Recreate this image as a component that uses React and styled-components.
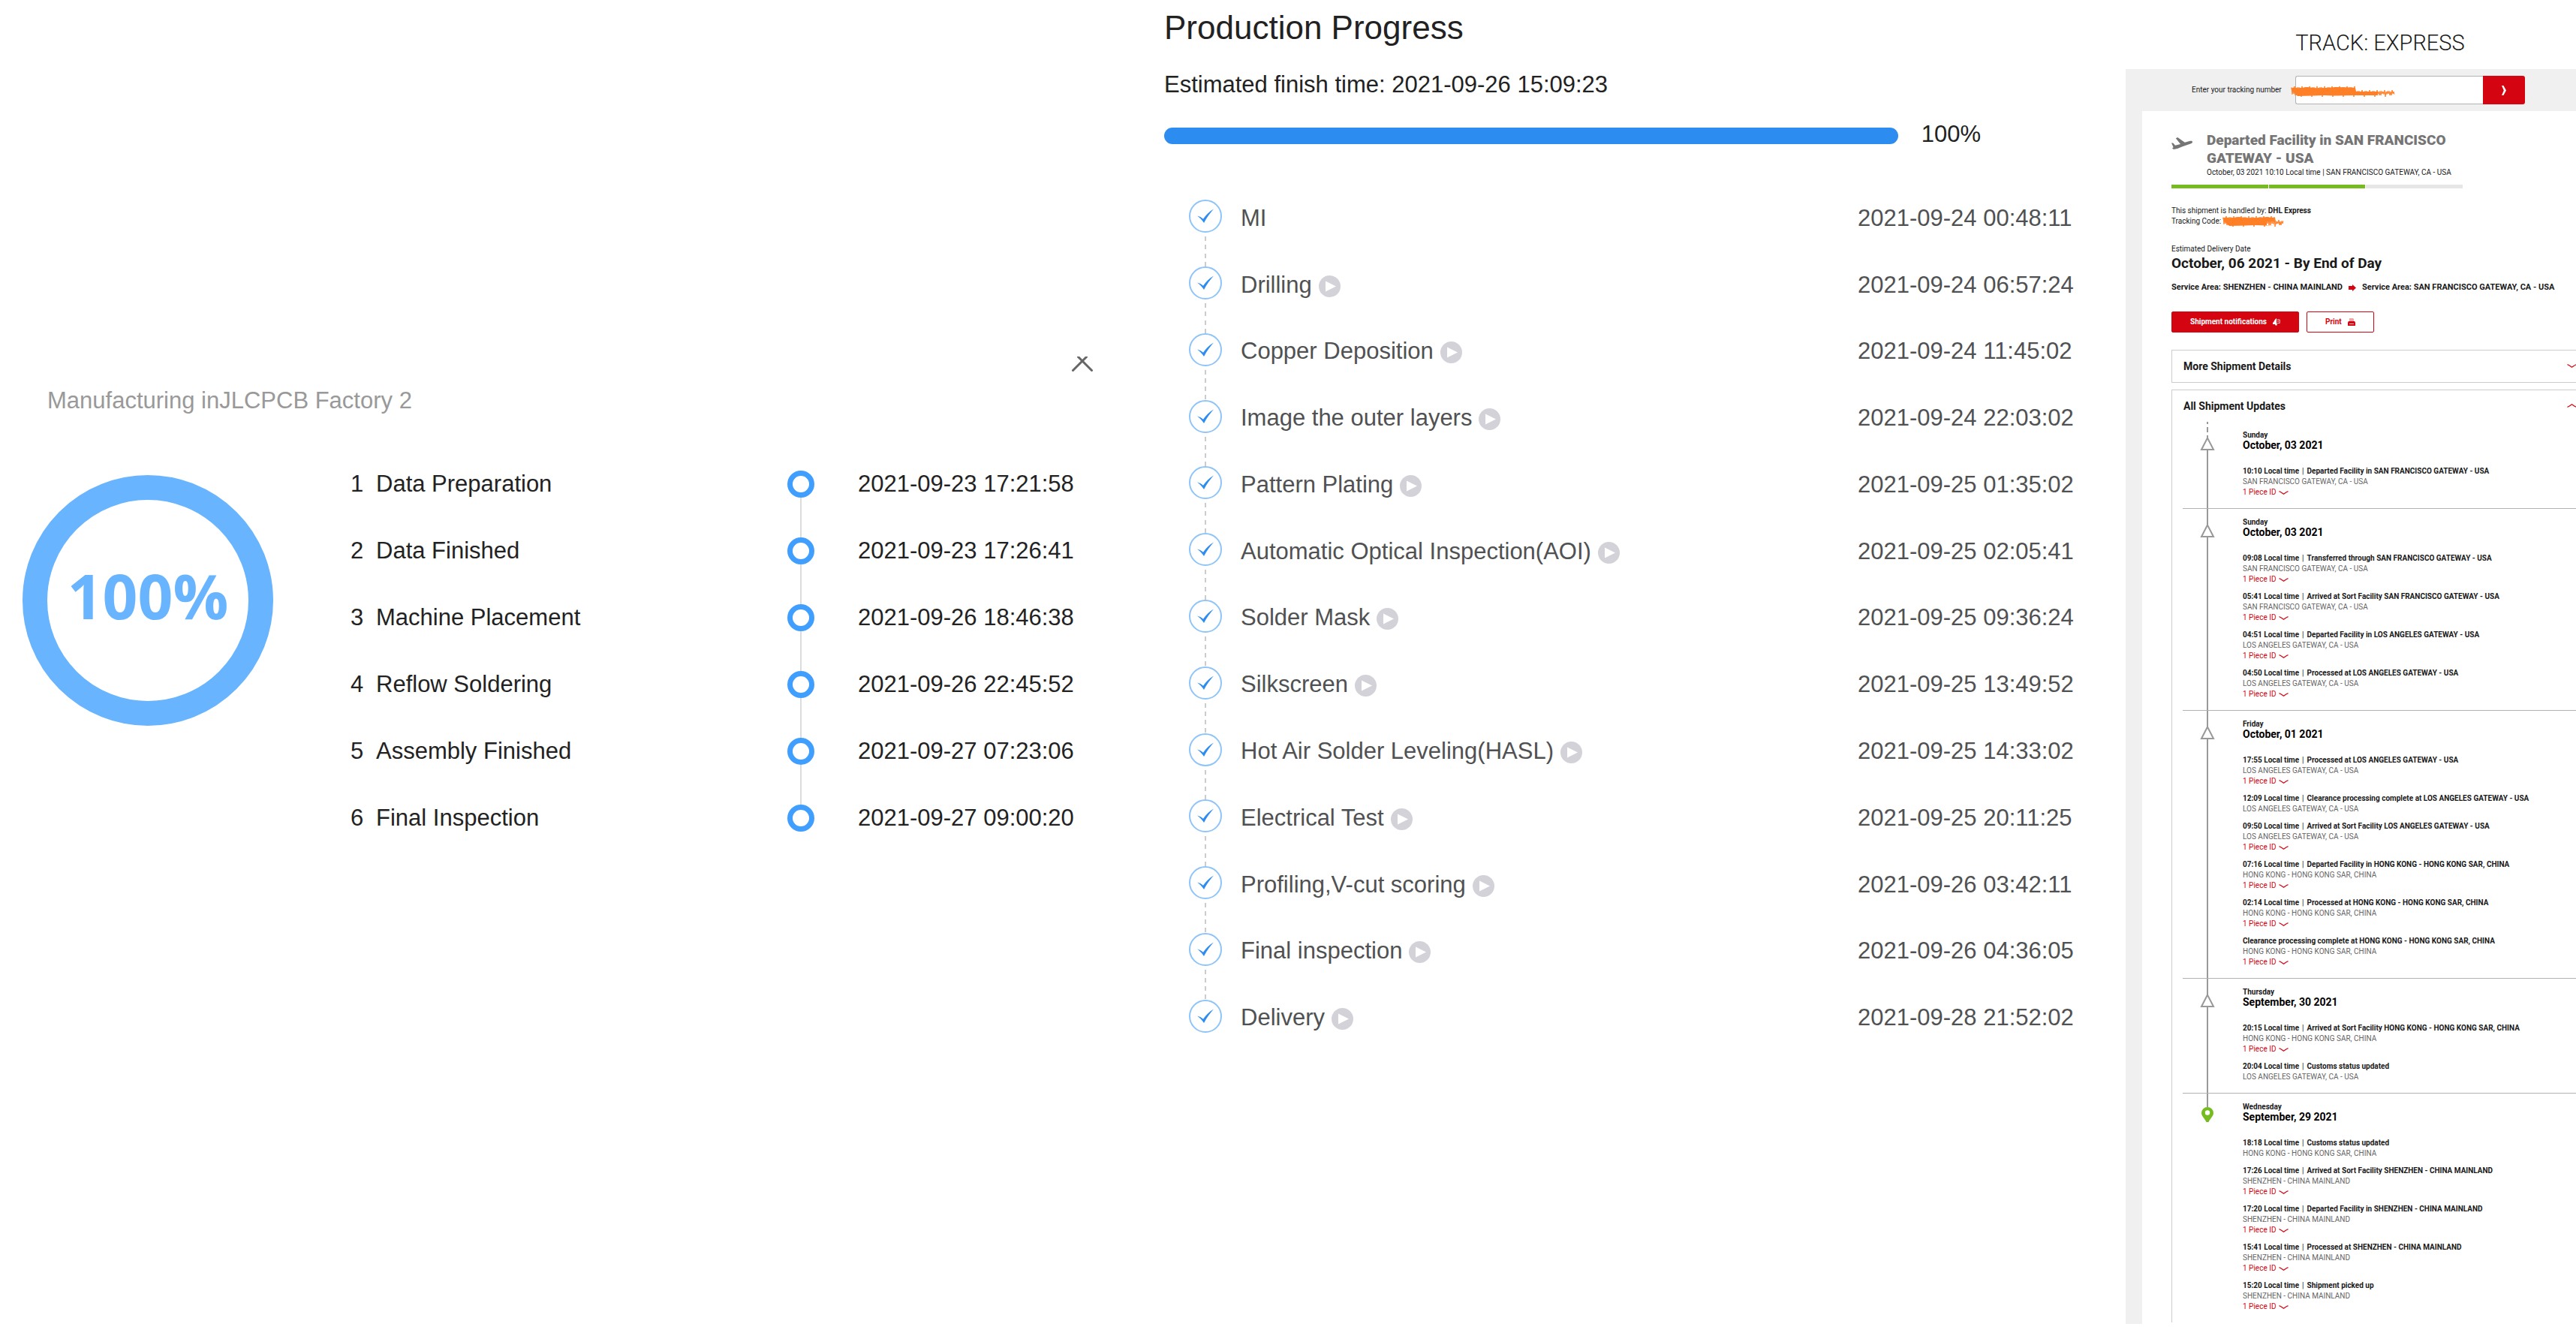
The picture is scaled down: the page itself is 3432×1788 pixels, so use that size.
import React from "react";
import styled, { createGlobalStyle, css } from "styled-components";

const assemblySteps = [
  { name: "Data Preparation", time: "2021-09-23 17:21:58" },
  { name: "Data Finished", time: "2021-09-23 17:26:41" },
  { name: "Machine Placement", time: "2021-09-26 18:46:38" },
  { name: "Reflow Soldering", time: "2021-09-26 22:45:52" },
  { name: "Assembly Finished", time: "2021-09-27 07:23:06" },
  { name: "Final Inspection", time: "2021-09-27 09:00:20" },
];

const productionSteps = [
  { name: "MI", time: "2021-09-24 00:48:11", video: false },
  { name: "Drilling", time: "2021-09-24 06:57:24", video: true },
  { name: "Copper Deposition", time: "2021-09-24 11:45:02", video: true },
  { name: "Image the outer layers", time: "2021-09-24 22:03:02", video: true },
  { name: "Pattern Plating", time: "2021-09-25 01:35:02", video: true },
  { name: "Automatic Optical Inspection(AOI)", time: "2021-09-25 02:05:41", video: true },
  { name: "Solder Mask", time: "2021-09-25 09:36:24", video: true },
  { name: "Silkscreen", time: "2021-09-25 13:49:52", video: true },
  { name: "Hot Air Solder Leveling(HASL)", time: "2021-09-25 14:33:02", video: true },
  { name: "Electrical Test", time: "2021-09-25 20:11:25", video: true },
  { name: "Profiling,V-cut scoring", time: "2021-09-26 03:42:11", video: true },
  { name: "Final inspection", time: "2021-09-26 04:36:05", video: true },
  { name: "Delivery", time: "2021-09-28 21:52:02", video: true },
];

const SF = "SAN FRANCISCO GATEWAY, CA - USA";
const LA = "LOS ANGELES GATEWAY, CA - USA";
const HK = "HONG KONG - HONG KONG SAR, CHINA";
const SZ = "SHENZHEN - CHINA MAINLAND";

const shipmentDays = [
  {
    day: "Sunday",
    date: "October, 03 2021",
    events: [
      { time: "10:10", text: "Departed Facility in SAN FRANCISCO GATEWAY - USA", place: SF, piece: true },
    ],
  },
  {
    day: "Sunday",
    date: "October, 03 2021",
    events: [
      { time: "09:08", text: "Transferred through SAN FRANCISCO GATEWAY - USA", place: SF, piece: true },
      { time: "05:41", text: "Arrived at Sort Facility SAN FRANCISCO GATEWAY - USA", place: SF, piece: true },
      { time: "04:51", text: "Departed Facility in LOS ANGELES GATEWAY - USA", place: LA, piece: true },
      { time: "04:50", text: "Processed at LOS ANGELES GATEWAY - USA", place: LA, piece: true },
    ],
  },
  {
    day: "Friday",
    date: "October, 01 2021",
    events: [
      { time: "17:55", text: "Processed at LOS ANGELES GATEWAY - USA", place: LA, piece: true },
      { time: "12:09", text: "Clearance processing complete at LOS ANGELES GATEWAY - USA", place: LA },
      { time: "09:50", text: "Arrived at Sort Facility LOS ANGELES GATEWAY - USA", place: LA, piece: true },
      { time: "07:16", text: "Departed Facility in HONG KONG - HONG KONG SAR, CHINA", place: HK, piece: true },
      { time: "02:14", text: "Processed at HONG KONG - HONG KONG SAR, CHINA", place: HK, piece: true },
      { text: "Clearance processing complete at HONG KONG - HONG KONG SAR, CHINA", place: HK, piece: true },
    ],
  },
  {
    day: "Thursday",
    date: "September, 30 2021",
    events: [
      { time: "20:15", text: "Arrived at Sort Facility HONG KONG - HONG KONG SAR, CHINA", place: HK, piece: true },
      { time: "20:04", text: "Customs status updated", place: LA },
    ],
  },
  {
    day: "Wednesday",
    date: "September, 29 2021",
    events: [
      { time: "18:18", text: "Customs status updated", place: HK },
      { time: "17:26", text: "Arrived at Sort Facility SHENZHEN - CHINA MAINLAND", place: SZ, piece: true },
      { time: "17:20", text: "Departed Facility in SHENZHEN - CHINA MAINLAND", place: SZ, piece: true },
      { time: "15:41", text: "Processed at SHENZHEN - CHINA MAINLAND", place: SZ, piece: true },
      { time: "15:20", text: "Shipment picked up", place: SZ, piece: true },
    ],
  },
];

const CollapseIcon = () => (
  <svg width="30" height="21" viewBox="0 0 30 21" fill="none" stroke="#666" strokeWidth="3" strokeLinecap="round">
    <path d="M2.5 18.5 20.5 0.5M27.5 18.5 9.5 0.5" />
  </svg>
);

const CheckIcon = () => (
  <svg width="44" height="44" viewBox="0 0 44 44">
    <circle cx="22" cy="22" r="21" fill="#fff" stroke="#8fc4f9" strokeWidth="2" />
    <path d="M11 21.5c3 .8 5.500 2 8 4.200C22.500 20.500 27 16 33 12.500 28 18 23.500 24 20 31c-2.500-4-5.500-7-9-9.500z" fill="#2d8cf0" />
  </svg>
);

const PlayIcon = () => (
  <svg width="29" height="29" viewBox="0 0 29 29">
    <circle cx="14.500" cy="14.500" r="14.500" fill="#d2d2d8" />
    <path d="M9 7.500v14l14-7z" fill="#fff" />
  </svg>
);

const PlaneIcon = () => (
  <svg width="28" height="16" viewBox="0 0 28 16" fill="#757575">
    <path d="M0 7.500h2.200L5 10.800l7-1.900L5.800 1.200 8.200 0l9.600 6.800 6.200-1.700c2.400-.6 4-.2 4 1.100 0 1.100-1.200 2-3.200 2.600L14 12.600l-6 2.300-5 1L1 14.600l1.600-1.300z" />
  </svg>
);

const SubmitIcon = () => (
  <svg width="6" height="13" viewBox="0 0 6 13" fill="#fff">
    <path d="M0 0h2.400L6 6.500 2.400 13H0l2.800-6.500z" />
  </svg>
);

const RouteIcon = () => (
  <svg width="10" height="9" viewBox="0 0 10 9" fill="#d40511">
    <path d="M0 2h5V0l5 4.500L5 9V7H0z" />
  </svg>
);

const BellIcon = () => (
  <svg width="10" height="10" viewBox="0 0 10 10">
    <path d="M5 0v7.500h1L5.500 9.500H3.500L3 8H0V6C2 5 1.800 2 5 0z" fill="#fff" />
    <path d="M5.500 2h3.800v4.500H5.500M6 4.200h2.200" fill="none" stroke="#fff" strokeOpacity=".75" />
  </svg>
);

const PrintIcon = () => (
  <svg width="10" height="10" viewBox="0 0 10 10">
    <path d="M2 0h5l1 1v4H2z" fill="#f0a5aa" />
    <path d="M1 4h8l1 1.500V10H0V5.500z" fill="#d40511" />
    <path d="M2 7.500h6" stroke="#f6c6c9" />
  </svg>
);

const Chevron = ({ up }) => (
  <svg width="13" height="5" viewBox="0 0 13 5" fill="none" stroke="#d40511" strokeWidth="1.300">
    <path d={up ? "M.5 4.300C3 3.500 4.500 2 6.500.8 8.500 2 10 3.500 12.500 4.300" : "M.5.700C3 1.500 4.500 3 6.500 4.200 8.500 3 10 1.500 12.500.700"} />
  </svg>
);

const TriangleIcon = () => (
  <svg width="20" height="20" viewBox="0 0 20 20">
    <path d="M10 0v4" stroke="#999" strokeWidth="2" />
    <path d="M10 3.500 18 19H2z" fill="#fff" stroke="#999" strokeWidth="2" />
  </svg>
);

const PinIcon = () => (
  <svg width="16" height="20" viewBox="0 0 16 20">
    <path d="M8 0a8 8 0 0 1 8 8c0 4-4.500 7.500-6.500 12h-3C4.500 15.500 0 12 0 8a8 8 0 0 1 8-8z" fill="#76bc21" />
    <circle cx="8" cy="7.500" r="3.200" fill="#fff" />
  </svg>
);

// Marker scribble that hides a number: a heavy stroke with a ragged edge, then a thin tail
const buildScribble = (width, solid) => {
  const points = [];
  for (let x = 1; x < width - 1; x += 1) {
    const thick = x < solid;
    const top = (thick ? 0 : 5) + ((x * x * 7) % 5) / 1.5;
    const bottom = 14 - ((x * x * 3) % 7) / 1.5;
    points.push(`${x},${x % 2 ? top : bottom}`);
  }
  return points.join(" ");
};

const Scribble = ({ width, solid }) => (
  <ScribbleSvg width={width} height="15" viewBox={`0 0 ${width} 15`} aria-hidden="true">
    <polyline points={buildScribble(width, solid)} fill="none" stroke="#ff7f27" />
    <path
      d={`M0 3 4 1.500 10 2.500 22 1 34 2.500 48 2 60 1 ${solid - 8} 1.500 ${solid} 2 ${solid + 1} 7 ${width - 24} 7V12L${solid} 12 58 12.500 44 12 30 12.500 9 13 4 8Z`}
      fill="#ff7f27"
    />
  </ScribbleSvg>
);

const ShipmentEvent = ({ event }) => (
  <EventItem>
    <EventTitle>
      {event.time && (
        <>
          {event.time} Local time<Separator>|</Separator>
        </>
      )}
      {event.text}
    </EventTitle>
    <EventPlace>{event.place}</EventPlace>
    {event.piece && (
      <PieceButton type="button">
        1 Piece ID <Chevron />
      </PieceButton>
    )}
  </EventItem>
);

export default function App() {
  return (
    <>
      <GlobalStyle />
      <Page>
        <AssemblyColumn>
          <CollapseButton type="button" aria-label="Collapse">
            <CollapseIcon />
          </CollapseButton>
          <FactoryName>Manufacturing inJLCPCB Factory 2</FactoryName>
          <AssemblyBody>
            <Ring>100%</Ring>
            <AssemblyList>
              {assemblySteps.map((step, index) => (
                <AssemblyRow key={step.name}>
                  <span>{index + 1}</span>
                  <span>{step.name}</span>
                  <Track>
                    <Stem $hidden={index === 0} />
                    <Dot />
                    <Stem $hidden={index === assemblySteps.length - 1} />
                  </Track>
                  <AssemblyTime>{step.time}</AssemblyTime>
                </AssemblyRow>
              ))}
            </AssemblyList>
          </AssemblyBody>
        </AssemblyColumn>

        <ProductionColumn>
          <ProductionTitle>Production Progress</ProductionTitle>
          <FinishTime>Estimated finish time: 2021-09-26 15:09:23</FinishTime>
          <ProgressRow>
            <ProgressBar role="progressbar" aria-label="Production progress" aria-valuenow={100} />
            <span>100%</span>
          </ProgressRow>
          <ProductionList>
            {productionSteps.map((step, index) => (
              <ProductionRow key={step.name}>
                <Track>
                  <Stem $dashed $hidden={index === 0} />
                  <CheckIcon />
                  <Stem $dashed $hidden={index === productionSteps.length - 1} />
                </Track>
                <ProductionName>
                  {step.name}
                  {step.video && (
                    <PlayButton type="button" aria-label={`Play ${step.name}`}>
                      <PlayIcon />
                    </PlayButton>
                  )}
                </ProductionName>
                <ProductionTime>{step.time}</ProductionTime>
              </ProductionRow>
            ))}
          </ProductionList>
        </ProductionColumn>

        <TrackColumn>
          <TrackPanel>
            <TrackTitle>TRACK: EXPRESS</TrackTitle>
            <TrackBody>
              <SearchForm onSubmit={(e) => e.preventDefault()}>
                <label htmlFor="tracking">Enter your tracking number</label>
                <SearchField>
                  <SearchInput id="tracking" type="text" />
                  <InputScribble>
                    <Scribble width={140} solid={86} />
                  </InputScribble>
                </SearchField>
                <SearchButton type="submit" aria-label="Track">
                  <SubmitIcon />
                </SearchButton>
              </SearchForm>
              <Card>
                <Status>
                  <StatusIcon>
                    <PlaneIcon />
                  </StatusIcon>
                  <div>
                    <StatusTitle>Departed Facility in SAN FRANCISCO GATEWAY - USA</StatusTitle>
                    <Line>October, 03 2021 10:10 Local time | SAN FRANCISCO GATEWAY, CA - USA</Line>
                  </div>
                </Status>
                <StageBar>
                  <Stage $done />
                  <Stage $done />
                  <Stage />
                </StageBar>
                <Block>
                  <Line>
                    This shipment is handled by: <b>DHL Express</b>
                  </Line>
                  <CodeLine>
                    Tracking Code: <Scribble width={83} solid={70} />
                  </CodeLine>
                </Block>
                <Block>
                  <Line>Estimated Delivery Date</Line>
                  <DeliveryDate>October, 06 2021 - By End of Day</DeliveryDate>
                </Block>
                <Route>
                  <span>Service Area: SHENZHEN - CHINA MAINLAND</span>
                  <RouteIcon />
                  <span>Service Area: SAN FRANCISCO GATEWAY, CA - USA</span>
                </Route>
                <Actions>
                  <ActionButton type="button" $primary>
                    Shipment notifications <BellIcon />
                  </ActionButton>
                  <ActionButton type="button">
                    Print <PrintIcon />
                  </ActionButton>
                </Actions>
                <Box>
                  <BoxHeader type="button" aria-expanded="false">
                    More Shipment Details <Chevron />
                  </BoxHeader>
                </Box>
                <Box $open>
                  <BoxHeader type="button" aria-expanded="true">
                    All Shipment Updates <Chevron up />
                  </BoxHeader>
                  {shipmentDays.map((item, index) => {
                    const last = index === shipmentDays.length - 1;
                    return (
                      <DaySection key={item.day + index}>
                        <DayTrack>
                          <DayStem $first={index === 0} />
                          {last ? <PinIcon /> : <TriangleIcon />}
                          {!last && <DayLine />}
                        </DayTrack>
                        <DayContent>
                          <DayName>{item.day}</DayName>
                          <DayDate>{item.date}</DayDate>
                          <EventList>
                            {item.events.map((event) => (
                              <ShipmentEvent key={event.text} event={event} />
                            ))}
                          </EventList>
                        </DayContent>
                      </DaySection>
                    );
                  })}
                </Box>
              </Card>
            </TrackBody>
          </TrackPanel>
        </TrackColumn>
      </Page>
    </>
  );
}

const GlobalStyle = createGlobalStyle`
  * {
    box-sizing: border-box;
  }
  body {
    margin: 0;
    background: #fff;
  }
  h1, h2, h3, p, ol, ul {
    margin: 0;
    padding: 0;
    font-weight: inherit;
    list-style: none;
  }
  button {
    padding: 0;
    border: 0;
    background: none;
    font: inherit;
    color: inherit;
    cursor: pointer;
  }
  svg {
    display: block;
    flex: none;
  }
`;

const Page = styled.main`
  display: grid;
  grid-template-columns: 1551fr 1281fr 600fr;
  font-family: "Liberation Sans", Arial, sans-serif;
  font-size: 31px;
  line-height: 36px;
  color: #222;
`;

/* Assembly */
const AssemblyColumn = styled.section`
  display: flex;
  flex-direction: column;
  min-width: 0;
  padding: 475px 118px 0 30px;
`;
const CollapseButton = styled.button`
  align-self: flex-end;
  margin-right: -24px;
`;
const FactoryName = styled.h2`
  margin: 20px 0 48px 33px;
  font-size: 31px;
  color: #999;
`;
const AssemblyBody = styled.div`
  display: flex;
  gap: 103px;
`;
const Ring = styled.div`
  display: flex;
  flex: none;
  align-items: center;
  justify-content: center;
  width: 334px;
  height: 334px;
  margin-top: 33px;
  border: 33px solid #69b4ff;
  border-radius: 50%;
  font-family: "Open Sans", "Noto Sans", sans-serif;
  font-size: 82px;
  font-weight: 700;
  line-height: 96px;
  padding-bottom: 14px;
  color: #69b4ff;
`;
const AssemblyList = styled.ol`
  display: grid;
  grid-auto-rows: 1fr;
  flex: 1;
  min-height: 535px;
`;
const AssemblyRow = styled.li`
  display: grid;
  grid-template-columns: 34px 1fr 36px 348px;
  align-items: center;
`;
const AssemblyTime = styled.time`
  padding-left: 58px;
  white-space: nowrap;
`;
const Track = styled.div`
  display: flex;
  flex-direction: column;
  align-items: center;
  align-self: stretch;
`;
const Stem = styled.span`
  flex: 1;
  width: 2px;
  background: ${({ $dashed }) =>
    $dashed ? "repeating-linear-gradient(transparent 0 5px, #ccc 5px 11px)" : "#dcdcdc"};
  visibility: ${({ $hidden }) => ($hidden ? "hidden" : "visible")};
`;
const Dot = styled.span`
  flex: none;
  width: 36px;
  height: 36px;
  border: 7px solid #409eff;
  border-radius: 50%;
`;

/* Production */
const ProductionColumn = styled.section`
  min-width: 0;
  padding-top: 12px;
`;
const ProductionTitle = styled.h1`
  font-size: 44px;
  line-height: 50px;
`;
const FinishTime = styled.p`
  margin-top: 33px;
`;
const ProgressRow = styled.div`
  display: flex;
  align-items: center;
  gap: 31px;
  margin-top: 30px;
  padding-right: 193px;
`;
const ProgressBar = styled.div`
  flex: 1;
  height: 22px;
  margin-top: 4px;
  border-radius: 11px;
  background: #2d8cf0;
`;
const ProductionList = styled.ol`
  display: grid;
  grid-auto-rows: 1fr;
  min-height: 1154px;
  margin-top: 47px;
  padding: 0 69px 0 33px;
  color: #505152;
`;
const ProductionRow = styled.li`
  display: grid;
  grid-template-columns: 44px 1fr 288px;
  align-items: center;
`;
const ProductionName = styled.div`
  display: flex;
  align-items: center;
  gap: 9px;
  padding: 5px 0 0 25px;
`;
const ProductionTime = styled.time`
  padding-top: 5px;
  white-space: nowrap;
`;
const PlayButton = styled.button`
  padding-top: 3px;
`;

/* Shipment tracking */
const TrackColumn = styled.section`
  min-width: 0;
  overflow: hidden;
  font-family: Roboto, sans-serif;
  font-size: 10px;
  line-height: 14px;
  color: #191919;
`;
const TrackPanel = styled.div`
  margin-right: -78px;
`;
const TrackTitle = styled.h2`
  padding: 37px 0 15px;
  font-size: 29px;
  font-weight: 300;
  line-height: 40px;
  text-align: center;
`;
const TrackBody = styled.div`
  padding: 0 22px;
  background: #f0f0f0;
`;
const SearchForm = styled.form`
  display: flex;
  align-items: center;
  padding: 9px 0 9px 66px;
`;
const SearchField = styled.div`
  position: relative;
  width: 250px;
  margin-left: 18px;
`;
const SearchInput = styled.input`
  display: block;
  width: 100%;
  height: 38px;
  padding: 0 12px;
  border: 1px solid #b2b2b2;
  border-right: 0;
  border-radius: 3px 0 0 3px;
  background: #fff;
  font: inherit;
`;
const InputScribble = styled.span`
  position: absolute;
  top: 14px;
  left: -6px;
`;
const ScribbleSvg = styled.svg`
  display: block;
`;
const SearchButton = styled.button`
  display: flex;
  align-items: center;
  justify-content: center;
  width: 56px;
  height: 38px;
  border-radius: 0 3px 3px 0;
  background: #d40511;
`;
const Card = styled.div`
  padding: 27px 39px 2px;
  background: #fff;
`;
const Status = styled.div`
  display: flex;
  gap: 19px;
  max-width: 388px;
`;
const StatusIcon = styled.span`
  padding-top: 8px;
`;
const StatusTitle = styled.h3`
  font-size: 19px;
  font-weight: 900;
  line-height: 24px;
  color: #757575;
`;
const Line = styled.p`
  white-space: nowrap;
`;
const CodeLine = styled(Line)`
  display: flex;
  gap: 2px;
  height: 14px;
`;
const StageBar = styled.div`
  display: flex;
  gap: 1px;
  max-width: 388px;
  margin-top: 9px;
`;
const Stage = styled.span`
  flex: 1;
  height: 5px;
  background: ${({ $done }) => ($done ? "#76bc21" : "#e6e6e6")};
`;
const Block = styled.div`
  margin-top: 23px;
`;
const DeliveryDate = styled.p`
  font-size: 19px;
  font-weight: 700;
  line-height: 24px;
`;
const Route = styled.p`
  display: flex;
  align-items: center;
  gap: 8px;
  margin-top: 12px;
  font-size: 11px;
  font-weight: 700;
  line-height: 16px;
  white-space: nowrap;
`;
const Actions = styled.div`
  display: flex;
  gap: 10px;
  margin: 24px 0 23px;
`;
const ActionButton = styled.button`
  display: flex;
  align-items: center;
  gap: 8px;
  height: 28px;
  padding: 0 24px;
  border: 1px solid #d40511;
  border-radius: 2px;
  font-weight: 700;
  color: #d40511;
  ${({ $primary }) =>
    $primary &&
    css`
      background: #d40511;
      color: #fff;
    `}
`;
const Box = styled.div`
  margin-bottom: 9px;
  border: 1px solid #ccc;
  ${({ $open }) =>
    $open &&
    css`
      margin-bottom: 0;
      border-bottom: 0;
    `}
`;
const BoxHeader = styled.button`
  display: flex;
  align-items: center;
  justify-content: space-between;
  width: 100%;
  height: 42px;
  padding: 0 15px 1px;
  font-size: 14px;
  font-weight: 700;
`;
const DaySection = styled.section`
  display: flex;
  margin: 0 14px;

  & + & {
    border-top: 1px solid #b2b2b2;
  }
`;
const DayTrack = styled.div`
  display: flex;
  flex: none;
  flex-direction: column;
  align-items: center;
  width: 66px;
`;
const DayStem = styled.span`
  width: 2px;
  height: 18px;
  background: ${({ $first }) =>
    $first
      ? "linear-gradient(#999 0 3px, transparent 3px 7px, #999 7px 14px, transparent 14px)"
      : "#999"};
`;
const DayLine = styled.span`
  flex: 1;
  width: 2px;
  background: #999;
`;
const DayContent = styled.div`
  padding: 12px 0 14px 14px;
`;
const DayName = styled.p`
  font-weight: 700;
  line-height: 12px;
`;
const DayDate = styled.h3`
  font-size: 14px;
  font-weight: 700;
  line-height: 14px;
  color: #000;
`;
const EventList = styled.ul`
  display: flex;
  flex-direction: column;
  gap: 9px;
  margin-top: 21px;
`;
const EventItem = styled.li`
  white-space: nowrap;
`;
const EventTitle = styled.p`
  font-weight: 700;
`;
const Separator = styled.span`
  margin: 0 4px;
  font-weight: 400;
`;
const EventPlace = styled.p`
  color: #666;
`;
const PieceButton = styled.button`
  display: flex;
  align-items: center;
  gap: 4px;
  color: #d40511;
`;
